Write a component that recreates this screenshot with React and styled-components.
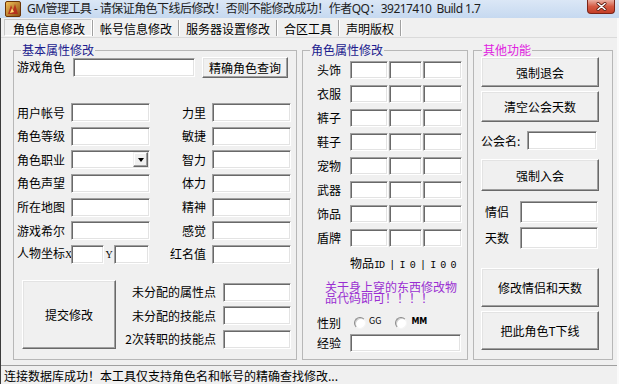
import { Fragment } from "react";
import styled, { createGlobalStyle } from "styled-components";

const GlobalStyle = createGlobalStyle`
  html, body {
    margin: 0;
    padding: 0;
    background: #ffffff;
  }
  #root {
    width: 619px;
    height: 384px;
  }
`;

const Window = styled.div`
  width: 619px;
  height: 384px;
  display: flex;
  flex-direction: column;
  overflow: hidden;
  background: #f0f0f0;
  color: #000;
  font-family: "Noto Sans CJK SC", sans-serif;
  font-size: 12px;
`;

const TitleBar = styled.div`
  flex: none;
  height: 18px;
  display: flex;
  align-items: center;
  padding: 0 4px 0 5px;
  background: linear-gradient(#dbe7f6, #c6d9f0);
`;

const TitleText = styled.span`
  flex: 1;
  margin-left: 6px;
  font-family: "Noto Sans", "Noto Sans CJK SC", sans-serif;
  font-size: 12px;
  letter-spacing: -0.55px;
  line-height: 18px;
  color: #1e1e1e;
  white-space: nowrap;
`;

const CloseButton = styled.div`
  align-self: flex-start;
  width: 28px;
  height: 14px;
  box-sizing: border-box;
  display: flex;
  align-items: center;
  justify-content: center;
  border: 1px solid #7a2418;
  border-top: none;
  border-radius: 0 0 4px 4px;
  background: linear-gradient(#eab0a3, #d55a43 50%, #c43e27);
`;

const Body = styled.div`
  flex: 1;
  display: flex;
  flex-direction: column;
  min-height: 0;
  border-left: 1px solid #3c3c3c;
  border-right: 2px solid #fafafa;
`;

const TabStrip = styled.div`
  flex: none;
  height: 19px;
  display: flex;
  align-items: center;
  padding-left: 3px;
`;

const Tab = styled.div`
  height: 17px;
  line-height: 17px;
  box-sizing: border-box;
  padding: ${({ $first }) => ($first ? "0 6px 0 8px" : "0 5px")};
  white-space: nowrap;
  border: 1px solid transparent;
  border-color: ${({ $active }) =>
    $active ? "#c8c8c8 #ffffff #ffffff #c8c8c8" : "transparent"};
`;

const TabSep = styled.div`
  width: 1px;
  height: 16px;
  background: #a0a0a0;
  border-right: 1px solid #ffffff;
`;

const Panel = styled.div`
  flex: 1;
  display: flex;
  gap: 5px;
  padding: 5px 0 5px 12px;
  border-top: 1px solid #dadada;
  min-height: 0;
`;

const Group = styled.fieldset`
  box-sizing: border-box;
  width: ${({ $w }) => $w}px;
  margin: 0;
  padding: ${({ $pad }) => $pad || "0"};
  min-width: 0;
  border: 1px solid #b7b7b7;
  display: flex;
  flex-direction: column;
`;

const Legend = styled.legend`
  margin-left: ${({ $ml }) => ($ml === undefined ? 7 : $ml)}px;
  padding: 0 1px;
  line-height: 14px;
  font-size: 12px;
  color: ${({ $color }) => $color};
`;

const Label = styled.span`
  flex: none;
  width: ${({ $w }) => ($w ? `${$w}px` : "auto")};
  line-height: 14px;
  white-space: nowrap;
  text-align: ${({ $right }) => ($right ? "right" : "left")};
  padding-right: ${({ $pr }) => $pr || 0}px;
  box-sizing: border-box;
`;

const Small = styled.span`
  font-family: "Liberation Serif", serif;
  font-size: 10px;
`;

const Field = styled.input`
  flex: none;
  box-sizing: border-box;
  width: ${({ $w }) => $w}px;
  height: ${({ $h }) => $h || 19}px;
  margin: 0;
  padding: 0 2px;
  background: #ffffff;
  border: 1px solid;
  border-color: #a0a0a0 #ffffff #ffffff #a0a0a0;
  box-shadow: inset 1px 1px 0 #696969, inset -1px -1px 0 #e3e3e3;
  outline: none;
`;

const Btn = styled.button`
  flex: none;
  box-sizing: border-box;
  width: ${({ $w }) => $w}px;
  height: ${({ $h }) => $h}px;
  margin: ${({ $mt }) => $mt || 0}px 0 0 ${({ $ml }) => $ml || 0}px;
  padding: 0;
  font-family: "Noto Sans CJK SC", sans-serif;
  font-size: 12px;
  color: #000;
  background: #f0f0f0;
  border: 1px solid;
  border-color: #ffffff #696969 #696969 #ffffff;
  box-shadow: inset -1px -1px 0 #a0a0a0, inset 1px 1px 0 #e3e3e3;
`;

const Combo = styled.div`
  flex: none;
  box-sizing: border-box;
  width: 79px;
  height: 19px;
  padding: 1px;
  display: flex;
  justify-content: flex-end;
  background: #ffffff;
  border: 1px solid;
  border-color: #a0a0a0 #ffffff #ffffff #a0a0a0;
  box-shadow: inset 1px 1px 0 #696969, inset -1px -1px 0 #e3e3e3;
`;

const ComboButton = styled.div`
  width: 15px;
  box-sizing: border-box;
  display: flex;
  align-items: center;
  justify-content: center;
  background: #f0f0f0;
  border: 1px solid;
  border-color: #f0f0f0 #696969 #696969 #f0f0f0;
  box-shadow: inset -1px -1px 0 #a0a0a0, inset 1px 1px 0 #ffffff;
`;

const Arrow = styled.span`
  width: 0;
  height: 0;
  border-left: 3.5px solid transparent;
  border-right: 3.5px solid transparent;
  border-top: 4px solid #000;
`;

/* 基本属性修改 */
const SearchRow = styled.div`
  display: flex;
  align-items: center;
  height: 20px;
  padding-left: 3px;
`;

const AttrGrid = styled.div`
  display: grid;
  grid-template-columns: 54px 79px 62px 79px;
  grid-auto-rows: 19px;
  row-gap: 4.67px;
  align-items: center;
  margin-top: 26px;
  padding-left: 3px;
`;

const CoordCell = styled.div`
  grid-column: span 2;
  display: flex;
  align-items: center;
`;

const CoordSep = styled.span`
  width: 10px;
  text-align: center;
  font-family: "Liberation Serif", serif;
  font-size: 10px;
`;

const BottomArea = styled.div`
  display: flex;
  justify-content: space-between;
  margin-top: 16px;
  padding: 0 5px 0 8px;
`;

const PointList = styled.div`
  display: flex;
  flex-direction: column;
  gap: 4.5px;
  padding-top: 3px;
`;

const PointRow = styled.div`
  display: flex;
  align-items: center;
  justify-content: flex-end;
  gap: 7px;
  height: 19px;
`;

/* 角色属性修改 */
const EquipGrid = styled.div`
  display: grid;
  grid-template-columns: 32px 38px 33px 39px;
  column-gap: 1px;
  grid-auto-rows: 18px;
  row-gap: 6px;
  align-items: center;
  padding: 4px 0 0 14px;
`;

const ItemHint = styled.div`
  margin: 8.5px 0 0 47px;
  line-height: 14px;
  white-space: pre;
`;

const Mono = styled.span`
  font-family: "Liberation Mono", monospace;
  font-size: 10px;
  letter-spacing: -0.9px;
`;

const Note = styled.div`
  margin: 8px 0 0 22px;
  width: 134px;
  line-height: 11px;
  color: #9a2fd2;
`;

const FormRow = styled.div`
  display: flex;
  align-items: center;
  height: ${({ $h }) => $h || 19}px;
  margin-top: ${({ $mt }) => $mt || 0}px;
  padding-left: ${({ $pl }) => $pl || 0}px;
`;

const Radio = styled.span`
  flex: none;
  width: 12px;
  height: 12px;
  box-sizing: border-box;
  margin-left: ${({ $ml }) => $ml}px;
  border-radius: 50%;
  border: 1px solid;
  border-color: #8a8a8a #f4f4f4 #f4f4f4 #8a8a8a;
  background: #ffffff;
  box-shadow: inset 1px 1px 0 #cfcfcf;
`;

const RadioText = styled.span`
  margin-left: ${({ $ml }) => $ml}px;
  font-family: "DejaVu Sans", sans-serif;
  font-size: 8px;
  font-weight: ${({ $bold }) => ($bold ? "bold" : "normal")};
  position: relative;
  top: -2px;
`;

const StatusBar = styled.div`
  flex: none;
  height: 19px;
  box-sizing: border-box;
  padding-left: 3px;
  line-height: 19px;
  border-top: 1px solid #a0a0a0;
  white-space: nowrap;
`;

const AppIcon = () => (
  <svg width="16" height="16" viewBox="0 0 16 16">
    <defs>
      <linearGradient id="ig" x1="0" y1="0" x2="1" y2="1">
        <stop offset="0" stopColor="#f4c35a" />
        <stop offset="1" stopColor="#8a4a12" />
      </linearGradient>
    </defs>
    <rect x="0.5" y="0.5" width="15" height="15" rx="1.5" fill="url(#ig)" stroke="#6b3508" />
    <path d="M3 13 L6 4 L8 9 L10 3 L13 13 Z" fill="#b5271a" opacity="0.85" />
    <path d="M5 12 L7 7 L9 11 Z" fill="#ffd873" />
  </svg>
);

const CloseGlyph = () => (
  <svg width="11" height="9" viewBox="0 0 11 9">
    <path d="M2 1.5 L9 7.5 M9 1.5 L2 7.5" stroke="#5a1a10" strokeWidth="3" strokeLinecap="round" />
    <path d="M2 1.5 L9 7.5 M9 1.5 L2 7.5" stroke="#ffffff" strokeWidth="1.6" strokeLinecap="round" />
  </svg>
);

const tabs = ["角色信息修改", "帐号信息修改", "服务器设置修改", "合区工具", "声明版权"];

const attrRows = [
  ["用户帐号", "力里"],
  ["角色等级", "敏捷"],
  ["角色职业", "智力", "combo"],
  ["角色声望", "体力"],
  ["所在地图", "精神"],
  ["游戏希尔", "感觉"],
];

const points = ["未分配的属性点", "未分配的技能点", "2次转职的技能点"];

const equipment = ["头饰", "衣服", "裤子", "鞋子", "宠物", "武器", "饰品", "盾牌"];

export default function App() {
  return (
    <>
      <GlobalStyle />
      <Window>
        <TitleBar>
          <AppIcon />
          <TitleText>
            GM管理工具 - 请保证角色下线后修改！否则不能修改成功！作者QQ：39217410&nbsp;&nbsp;Build 1.7
          </TitleText>
          <CloseButton>
            <CloseGlyph />
          </CloseButton>
        </TitleBar>

        <Body>
          <TabStrip>
            {tabs.map((t, i) => (
              <Fragment key={t}>
                <Tab $first={i === 0} $active={i === 0}>
                  {t}
                </Tab>
                <TabSep />
              </Fragment>
            ))}
          </TabStrip>

          <Panel>
            {/* 基本属性修改 */}
            <Group $w={284}>
              <Legend $color="#1b1b8e">基本属性修改</Legend>
              <SearchRow>
                <Label $w={56}>游戏角色</Label>
                <Field $w={122} />
                <Btn $w={86} $h={21} $ml={7}>
                  精确角色查询
                </Btn>
              </SearchRow>

              <AttrGrid>
                {attrRows.map(([left, right, kind]) => (
                  <Fragment key={left}>
                    <Label>{left}</Label>
                    {kind === "combo" ? (
                      <Combo>
                        <ComboButton>
                          <Arrow />
                        </ComboButton>
                      </Combo>
                    ) : (
                      <Field $w={79} />
                    )}
                    <Label $right $pr={6}>
                      {right}
                    </Label>
                    <Field $w={79} />
                  </Fragment>
                ))}
                <CoordCell>
                  <Label $w={54}>
                    人物坐标<Small>X</Small>
                  </Label>
                  <Field $w={33} />
                  <CoordSep>Y</CoordSep>
                  <Field $w={35} />
                </CoordCell>
                <Label $right $pr={6}>
                  红名值
                </Label>
                <Field $w={79} />
              </AttrGrid>

              <BottomArea>
                <Btn $w={94} $h={69}>
                  提交修改
                </Btn>
                <PointList>
                  {points.map((p) => (
                    <PointRow key={p}>
                      <Label>{p}</Label>
                      <Field $w={68} />
                    </PointRow>
                  ))}
                </PointList>
              </BottomArea>
            </Group>

            {/* 角色属性修改 */}
            <Group $w={166}>
              <Legend $color="#1b1b8e">角色属性修改</Legend>
              <EquipGrid>
                {equipment.map((e) => (
                  <Fragment key={e}>
                    <Label>{e}</Label>
                    <Field $w={38} $h={18} />
                    <Field $w={33} $h={18} />
                    <Field $w={39} $h={18} />
                  </Fragment>
                ))}
              </EquipGrid>
              <ItemHint>
                物品<Mono>ID | I 0 | I 0 0</Mono>
              </ItemHint>
              <Note>关于身上穿的东西修改物品代码即可！！！！</Note>
              <FormRow $h={18} $mt={11.5} $pl={14}>
                <Label $w={33}>性别</Label>
                <Radio $ml={4} />
                <RadioText $ml={3}>GG</RadioText>
                <Radio $ml={14} />
                <RadioText $ml={4} $bold>
                  MM
                </RadioText>
              </FormRow>
              <FormRow $h={18} $mt={2} $pl={14}>
                <Label $w={33}>经验</Label>
                <Field $w={111} $h={18} />
              </FormRow>
            </Group>

            {/* 其他功能 */}
            <Group $w={140} $pad="0 0 0 7px">
              <Legend $color="#e021e0" $ml={1}>
                其他功能
              </Legend>
              <Btn $w={118} $h={30}>
                强制退会
              </Btn>
              <Btn $w={118} $h={31} $mt={4}>
                清空公会天数
              </Btn>
              <FormRow $mt={9}>
                <Label $w={46}>公会名:</Label>
                <Field $w={70} />
              </FormRow>
              <Btn $w={118} $h={32} $mt={9}>
                强制入会
              </Btn>
              <FormRow $h={22} $mt={10} $pl={4}>
                <Label $w={35}>情侣</Label>
                <Field $w={78} $h={22} />
              </FormRow>
              <FormRow $h={22} $mt={4} $pl={4}>
                <Label $w={35}>天数</Label>
                <Field $w={78} $h={22} />
              </FormRow>
              <Btn $w={118} $h={39} $mt={19}>
                修改情侣和天数
              </Btn>
              <Btn $w={118} $h={39} $mt={4}>
                把此角色T下线
              </Btn>
            </Group>
          </Panel>

          <StatusBar>连接数据库成功！本工具仅支持角色名和帐号的精确查找修改...</StatusBar>
        </Body>
      </Window>
    </>
  );
}
